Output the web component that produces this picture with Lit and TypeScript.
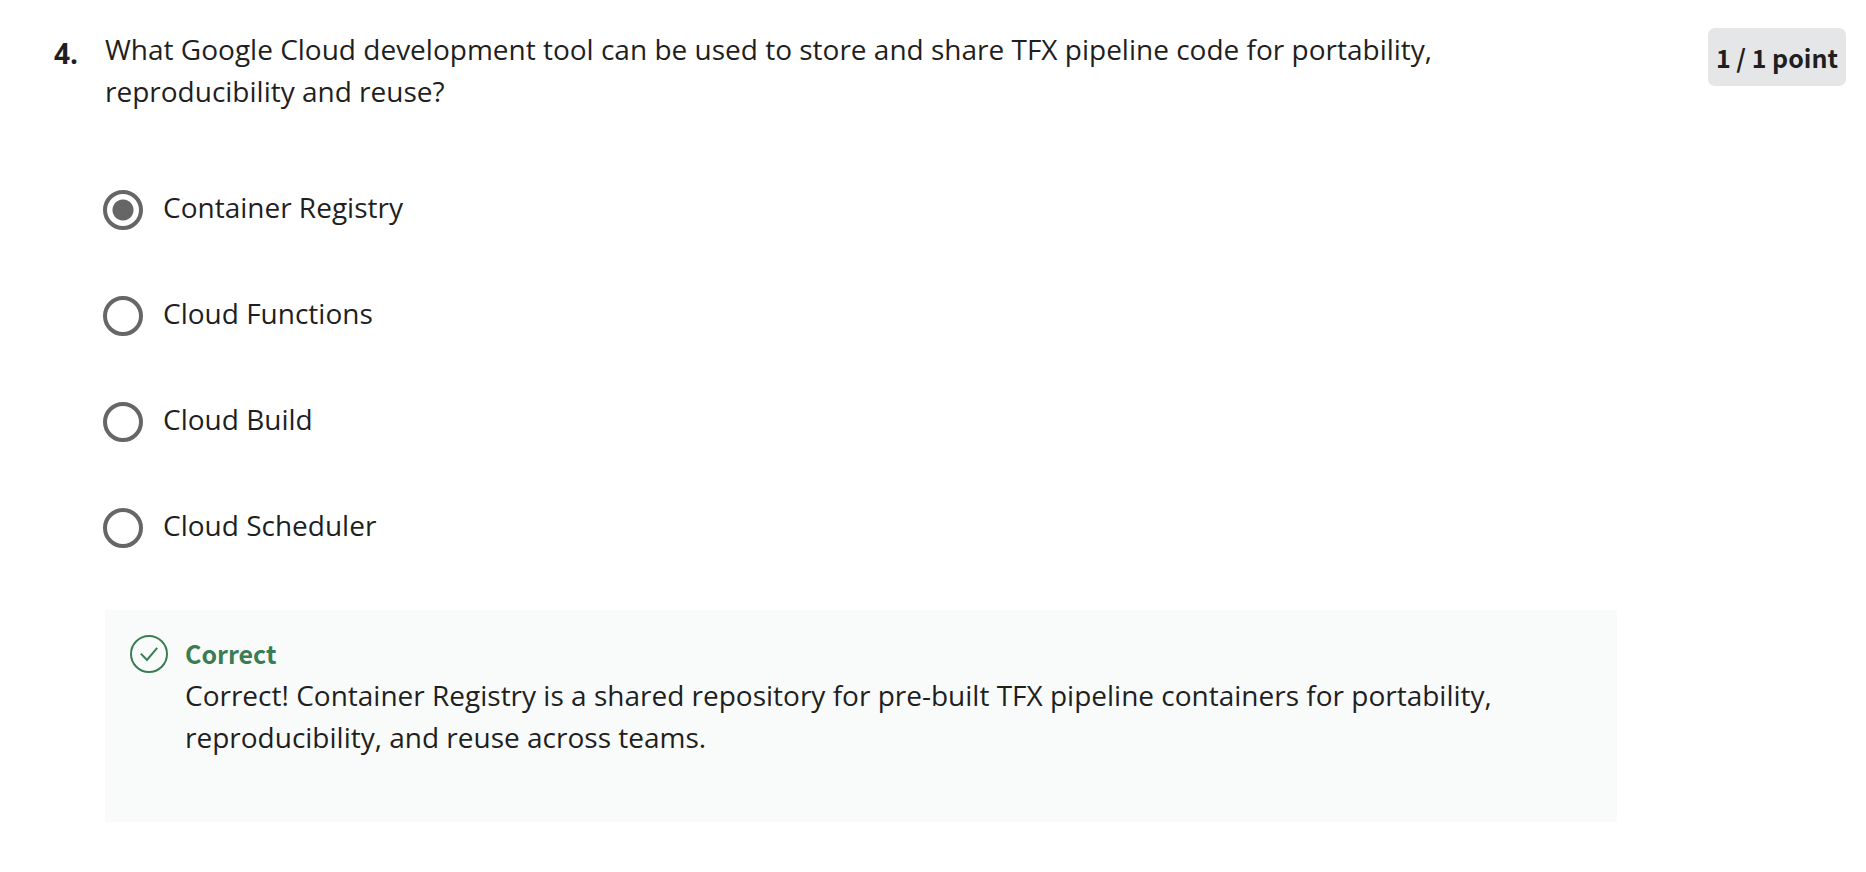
import { LitElement, html, css } from "lit";
import { customElement, state } from "lit/decorators.js";

const OPTIONS = [
  "Container Registry",
  "Cloud Functions",
  "Cloud Build",
  "Cloud Scheduler",
];

@customElement("quiz-feedback")
export class QuizFeedback extends LitElement {
  static styles = css`
    :host {
      display: block;
    }
    .panel {
      display: grid;
      grid-template-columns: 38px 1fr;
      column-gap: 17px;
      padding: 22px 25px 64px;
      background: #f9fbfa;
    }
    .icon {
      width: 38px;
      height: 38px;
      margin-top: 3px;
    }
    .title {
      margin: 0;
      font: 700 25px/42px "Noto Sans CJK SC", sans-serif;
      color: #3a7d54;
    }
    .message {
      margin: 0;
    }
  `;

  render() {
    return html`
      <section class="panel">
        <svg class="icon" viewBox="0 0 38 38" fill="none" stroke="#3a7d54" stroke-width="2" aria-hidden="true">
          <circle cx="19" cy="19" r="18" />
          <path d="M10.8 18.6 17 25 27.2 12.8" />
        </svg>
        <div>
          <h2 class="title">Correct</h2>
          <p class="message">
            Correct! Container Registry is a shared repository for pre-built TFX
            pipeline containers for portability, reproducibility, and reuse
            across teams.
          </p>
        </div>
      </section>
    `;
  }
}

@customElement("app-root")
export class AppRoot extends LitElement {
  static styles = css`
    :host {
      display: block;
      background: #fff;
      color: #1f1f1f;
      font: 400 28px/42px "Open Sans", sans-serif;
    }
    .question {
      display: grid;
      grid-template-columns: 51px 1fr auto;
      align-items: start;
      padding: 28px 20px 48px 54px;
    }
    .number {
      padding-top: 4px;
      font-weight: 700;
    }
    .choices {
      display: grid;
      gap: 62px;
      min-width: 0;
      margin: 0;
      padding: 0;
      border: 0;
    }
    .prompt {
      padding: 0;
      margin-bottom: 74px;
    }
    .choice {
      display: flex;
      align-items: flex-start;
      gap: 20px;
      margin-left: -2px;
    }
    .radio {
      appearance: none;
      flex: none;
      box-sizing: border-box;
      width: 40px;
      height: 40px;
      margin: 4px 0 0;
      border: 4px solid #666;
      border-radius: 50%;
    }
    .radio:checked {
      background: radial-gradient(circle, #666 10px, transparent 11px);
    }
    .feedback {
      margin-top: 62px;
    }
    .points {
      margin-left: 91px;
      padding: 8px;
      border-radius: 7px;
      background: #e5e6e8;
      font: 700 25px/42px "Noto Sans CJK SC", sans-serif;
      white-space: nowrap;
    }
  `;

  @state() private selected = 0;

  render() {
    return html`
      <main class="question">
        <div class="number">4.</div>
        <div>
          <fieldset class="choices">
            <legend class="prompt">
              What Google Cloud development tool can be used to store and share
              TFX pipeline code for portability, reproducibility and reuse?
            </legend>
            ${OPTIONS.map(
              (label, i) => html`
                <label class="choice">
                  <input
                    class="radio"
                    type="radio"
                    name="answer"
                    .checked=${this.selected === i}
                    @change=${() => (this.selected = i)}
                  />
                  <span>${label}</span>
                </label>
              `
            )}
          </fieldset>
          <quiz-feedback class="feedback"></quiz-feedback>
        </div>
        <div class="points">1 / 1 point</div>
      </main>
    `;
  }
}
